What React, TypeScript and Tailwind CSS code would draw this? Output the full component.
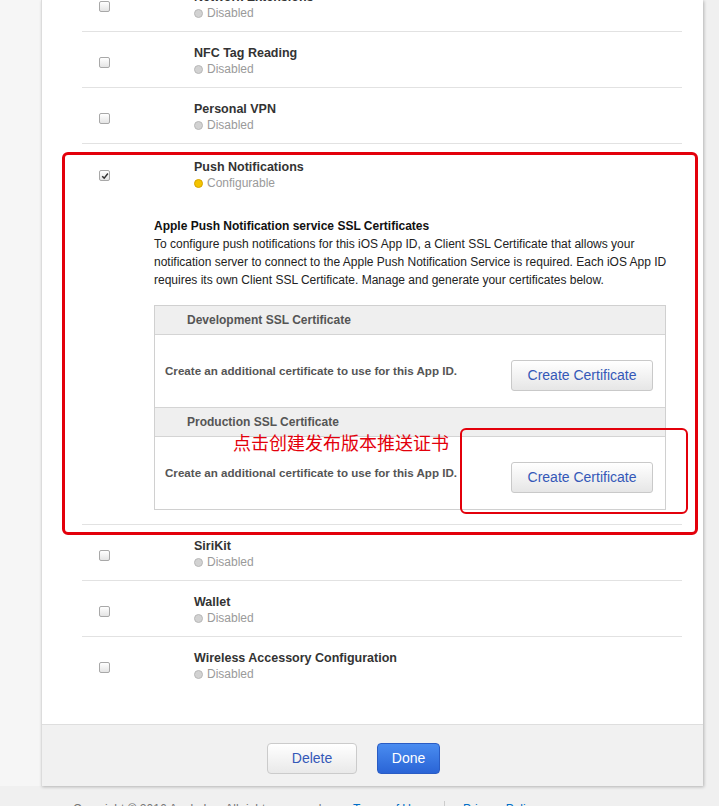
import React from "react";

const Checkbox = ({ checked = false }: { checked?: boolean }) => (
  <span className="relative block h-[11px] w-[11px] rounded-[2px] border border-[#a8a8a8] bg-linear-to-b from-white to-[#e4e4e4]">
    {checked && (
      <svg viewBox="0 0 10 10" className="absolute left-[1px] top-[1px] h-[8px] w-[8px]">
        <path d="M1.5 5.2 L4 7.6 L8.6 1.8" fill="none" stroke="#333" strokeWidth="1.8" />
      </svg>
    )}
  </span>
);

const Status = ({ label, yellow = false }: { label: string; yellow?: boolean }) => (
  <div className="flex h-[16px] items-center text-[12px] text-[#9a9a9a]">
    <span
      className={
        yellow
          ? "mr-[4px] inline-block h-[9px] w-[9px] rounded-full border border-[#d6a400] bg-[#f4c400]"
          : "mr-[4px] inline-block h-[9px] w-[9px] rounded-full border border-[#b8b8b8] bg-[#d2d2d2]"
      }
    />
    {label}
  </div>
);

const ServiceRow = ({ title, last = false }: { title: string; last?: boolean }) => (
  <div className={`flex h-[56px] ${last ? "" : "border-b border-[#e2e2e2]"}`}>
    <div className="w-[112px] pl-[17px] pt-[25px]">
      <Checkbox />
    </div>
    <div className="pt-[14px]">
      <div className="h-[15px] text-[12.5px] font-bold leading-[15px] text-[#333]">{title}</div>
      <Status label="Disabled" />
    </div>
  </div>
);

const CertSection = ({ title }: { title: string }) => (
  <>
    <div className="h-[29px] border-b border-[#d4d4d4] bg-[#efefef] pl-[32px] text-[12px] font-bold leading-[28px] text-[#555]">
      {title}
    </div>
    <div className="flex items-start justify-between pb-[16px] pl-[10px] pr-[12px] pt-[25px]">
      <div className="mt-[3px] text-[11.6px] font-bold leading-[16px] text-[#555]">
        Create an additional certificate to use for this App ID.
      </div>
      <button className="h-[31px] w-[142px] rounded-[3px] border border-[#c9c9c9] bg-linear-to-b from-white to-[#e6e6e6] text-[14px] text-[#3458b8]">
        Create Certificate
      </button>
    </div>
  </>
);

export default function App() {
  const before = ["Network Extensions", "NFC Tag Reading", "Personal VPN"];
  const after = ["SiriKit", "Wallet"];

  return (
    <div className="flex h-[806px] w-[719px] flex-col overflow-hidden bg-[#f0f0f0] font-['Liberation_Sans',Arial,sans-serif]">
      <div className="flex">
        {/* Left strip */}
        <div className="w-[41px] shrink-0 bg-[#f6f6f6]" />
        {/* Panel */}
        <div className="w-[662px] shrink-0 border-l border-[#dcdcdc] bg-white shadow-[1px_1px_3px_rgba(0,0,0,0.25)]">
          <div className="ml-[40px] mr-[21px] mt-[-24px] pb-[31px]">
            {before.map((t) => (
              <ServiceRow key={t} title={t} />
            ))}

            {/* Push Notifications */}
            <div className="relative border-b border-[#e2e2e2] pb-[14px]">
              <div className="flex">
                <div className="w-[112px] pl-[17px] pt-[26px]">
                  <Checkbox checked />
                </div>
                <div className="pt-[16px]">
                  <div className="h-[15px] text-[12.5px] font-bold leading-[15px] text-[#333]">Push Notifications</div>
                  <Status label="Configurable" yellow />
                </div>
              </div>
              <div className="ml-[72px] mr-[16px] mt-[26px]">
                <div className="text-[12px] font-bold leading-[18px] text-[#111]">
                  Apple Push Notification service SSL Certificates
                </div>
                <div className="text-[12px] leading-[18px] text-[#222]">
                  <div className="whitespace-nowrap">
                    To configure push notifications for this iOS App ID, a Client SSL Certificate that allows your
                  </div>
                  <div className="whitespace-nowrap">
                    notification server to connect to the Apple Push Notification Service is required. Each iOS App ID
                  </div>
                  <div className="whitespace-nowrap">
                    requires its own Client SSL Certificate. Manage and generate your certificates below.
                  </div>
                </div>
                <div className="mt-[16px] border border-[#d0d0d0]">
                  <CertSection title="Development SSL Certificate" />
                  <div className="border-t border-[#d4d4d4]" />
                  <CertSection title="Production SSL Certificate" />
                </div>
              </div>

              {/* Annotations */}
              <div className="pointer-events-none absolute left-[-20px] top-[8px] h-[383px] w-[636px] rounded-[6px] border-[3px] border-[#e3000b]" />
              <div className="pointer-events-none absolute left-[378px] top-[284px] h-[86px] w-[228px] rounded-[6px] border-[2.5px] border-[#e3000b]" />
              <div className="absolute left-[151px] top-[286px] text-[18px] leading-[24px] text-[#e3000b] font-['Noto_Sans_CJK_SC',sans-serif]">
                点击创建发布版本推送证书
              </div>
            </div>

            {after.map((t) => (
              <ServiceRow key={t} title={t} />
            ))}
            <ServiceRow title="Wireless Accessory Configuration" last />
          </div>

          {/* Panel footer */}
          <div className="flex h-[62px] border-t border-[#dedede] bg-[#f1f1f1] pl-[225px] pt-[18px]">
            <button className="h-[31px] w-[90px] rounded-[4px] border border-[#cbcbcb] bg-linear-to-b from-white to-[#e9e9e9] text-[14px] text-[#3458b8]">
              Delete
            </button>
            <button className="ml-[20px] h-[31px] w-[63px] rounded-[4px] border border-[#2a5cc4] bg-linear-to-b from-[#4a8cf0] to-[#2a64d6] text-[14px] text-white">
              Done
            </button>
          </div>
        </div>
        <div className="flex-1" />
      </div>

      {/* Page footer */}
      <div className="mt-[15px] flex pl-[73px] text-[12px] leading-[16px]">
        <span className="w-[280px] text-[#777]">Copyright © 2016 Apple Inc. All rights reserved.</span>
        <span className="w-[91px] text-[#0070c9]">Terms of Use</span>
        <span className="mr-[18px] border-l border-[#ccc]" />
        <span className="text-[#0070c9]">Privacy Policy</span>
      </div>
    </div>
  );
}
